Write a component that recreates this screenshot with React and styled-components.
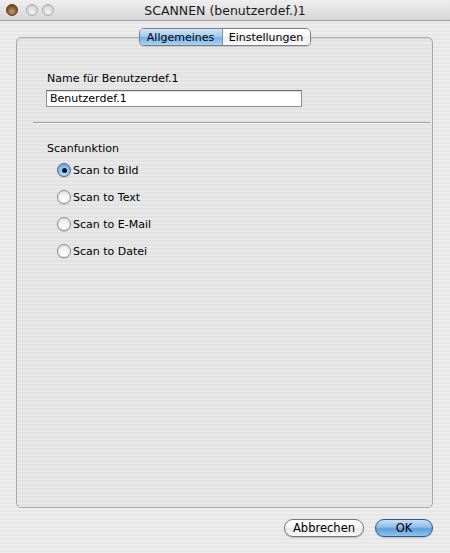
import React, { useState } from 'react'
import styled, { createGlobalStyle } from 'styled-components'

const GlobalStyle = createGlobalStyle`
  * { margin: 0; padding: 0; box-sizing: border-box; }
  body {
    font-family: "DejaVu Sans", "Liberation Sans", sans-serif;
    font-size: 11px;
    color: #000;
  }
`

const stripes = `repeating-linear-gradient(180deg, #ededed 0px, #ededed 2px, #e6e6e6 2px, #e6e6e6 4px)`

const Window = styled.div`
  width: 450px;
  height: 553px;
  display: flex;
  flex-direction: column;
  background: ${stripes};
  overflow: hidden;
`

const TitleBar = styled.div`
  height: 21px;
  flex-shrink: 0;
  display: flex;
  align-items: center;
  position: relative;
  padding-left: 6px;
  background: linear-gradient(180deg, #efefef 0%, #e2e2e2 50%, #d6d6d6 100%);
  border-bottom: 1px solid #9c9c9c;
  border-radius: 5px 5px 0 0;
`

const Lights = styled.div`
  display: flex;
  gap: 4px;
`

const Light = styled.span`
  width: 12px;
  height: 12px;
  border-radius: 50%;
  margin-right: ${p => (p.$active ? 4 : 0)}px;
  border: 1px solid ${p => (p.$active ? '#5a3b22' : '#a8a8a8')};
  background: ${p =>
    p.$active
      ? 'radial-gradient(circle at 50% 65%, #c79a6d 0%, #8b5a32 55%, #5e3a1e 100%)'
      : 'radial-gradient(circle at 50% 70%, #f4f4f4 0%, #d8d8d8 60%, #bcbcbc 100%)'};
`

const Title = styled.div`
  position: absolute;
  left: 0;
  right: 0;
  text-align: center;
  font-size: 12.5px;
  color: #1a1a1a;
  pointer-events: none;
`

const Body = styled.div`
  flex: 1;
  display: flex;
  flex-direction: column;
  padding: 16px 17px 0 16px;
`

const TabBox = styled.div`
  height: 471px;
  border: 1px solid #a9a9a9;
  border-radius: 5px;
  background: repeating-linear-gradient(180deg, #e8e8e8 0px, #e8e8e8 2px, #e2e2e2 2px, #e2e2e2 4px);
  box-shadow: inset 0 1px 1px rgba(0,0,0,0.08);
  display: flex;
  flex-direction: column;
`

const TabRow = styled.div`
  display: flex;
  justify-content: center;
  margin-top: -10px;
`

const Segments = styled.div`
  display: flex;
  height: 18px;
  border: 1px solid #7e7e7e;
  border-radius: 5px;
  overflow: hidden;
  box-shadow: 0 1px 1px rgba(0,0,0,0.15);
`

const Segment = styled.div`
  height: 100%;
  width: ${p => p.$w}px;
  display: flex;
  align-items: center;
  justify-content: center;
  font-size: 11px;
  border-left: ${p => (p.$first ? 'none' : '1px solid #8a8a8a')};
  background: ${p =>
    p.$selected
      ? 'linear-gradient(180deg, #d3e6f8 0%, #a3cbef 45%, #78b1e6 55%, #a8d3f5 100%)'
      : 'linear-gradient(180deg, #ffffff 0%, #f7f7f7 45%, #ececec 55%, #fbfbfb 100%)'};
`

const Content = styled.div`
  display: flex;
  flex-direction: column;
  padding: 26px 2px 0 30px;
`

const Label = styled.div`
  font-size: 11px;
  line-height: 13px;
`

const TextInput = styled.input`
  margin-top: 5px;
  width: 256px;
  height: 17px;
  margin-left: -1px;
  border: 1px solid #8f8f8f;
  border-top-color: #6f6f6f;
  background: #fff;
  font-family: "DejaVu Sans", "Liberation Sans", sans-serif;
  font-size: 11px;
  padding: 0 3px;
  outline: none;
  box-shadow: inset 0 1px 1px rgba(0,0,0,0.15);
`

const Separator = styled.div`
  height: 2px;
  margin: 15px 0 18px -14px;
  border-top: 1px solid #9d9d9d;
  border-bottom: 1px solid #f6f6f6;
`

const RadioList = styled.div`
  display: flex;
  flex-direction: column;
  gap: 13px;
  margin-top: 8px;
  padding-left: 10px;
`

const RadioRow = styled.label`
  display: flex;
  align-items: center;
  gap: 2px;
  height: 14px;
  cursor: default;
`

const RadioCircle = styled.span`
  width: 14px;
  height: 14px;
  border-radius: 50%;
  border: 1px solid ${p => (p.$on ? '#4a6f9c' : '#8d8d8d')};
  display: flex;
  align-items: center;
  justify-content: center;
  background: ${p =>
    p.$on
      ? 'radial-gradient(circle at 50% 70%, #cbe5fb 0%, #7fb5e8 60%, #4f89c7 100%)'
      : 'radial-gradient(circle at 50% 75%, #ffffff 0%, #f0f0f0 55%, #cfcfcf 100%)'};
  box-shadow: 0 1px 1px rgba(0,0,0,0.15);
`

const Dot = styled.span`
  width: 5px;
  height: 5px;
  border-radius: 50%;
  background: #111;
`

const RadioText = styled.span`
  font-size: 11px;
`

const Footer = styled.div`
  display: flex;
  justify-content: flex-end;
  gap: 11px;
  padding: 11px 0 0 0;
`

const Button = styled.button`
  height: 18px;
  width: ${p => p.$w}px;
  border-radius: 9px;
  border: 1px solid ${p => (p.$primary ? '#36598a' : '#777')};
  font-family: "DejaVu Sans", "Liberation Sans", sans-serif;
  font-size: 11.5px;
  color: #000;
  background: ${p =>
    p.$primary
      ? 'linear-gradient(180deg, #c6dff6 0%, #8dbde9 45%, #5e9ed9 55%, #8fc4f0 100%)'
      : 'linear-gradient(180deg, #ffffff 0%, #f6f6f6 45%, #e8e8e8 55%, #fafafa 100%)'};
  box-shadow: 0 1px 1px rgba(0,0,0,0.2);
`

const options = ['Scan to Bild', 'Scan to Text', 'Scan to E-Mail', 'Scan to Datei']

export default function App() {
  const [name, setName] = useState('Benutzerdef.1')
  const [choice, setChoice] = useState(0)
  return (
    <Window>
      <GlobalStyle />
      <TitleBar>
        <Lights>
          <Light $active />
          <Light />
          <Light />
        </Lights>
        <Title>SCANNEN (benutzerdef.)1</Title>
      </TitleBar>
      <Body>
        <TabBox>
          <TabRow>
            <Segments>
              <Segment $first $selected $w={82}>Allgemeines</Segment>
              <Segment $w={88}>Einstellungen</Segment>
            </Segments>
          </TabRow>
          <Content>
            <Label>Name für Benutzerdef.1</Label>
            <TextInput value={name} onChange={e => setName(e.target.value)} />
            <Separator />
            <Label>Scanfunktion</Label>
            <RadioList>
              {options.map((o, i) => (
                <RadioRow key={o} onClick={() => setChoice(i)}>
                  <RadioCircle $on={choice === i}>{choice === i && <Dot />}</RadioCircle>
                  <RadioText>{o}</RadioText>
                </RadioRow>
              ))}
            </RadioList>
          </Content>
        </TabBox>
        <Footer>
          <Button $w={80}>Abbrechen</Button>
          <Button $primary $w={58}>OK</Button>
        </Footer>
      </Body>
    </Window>
  )
}
